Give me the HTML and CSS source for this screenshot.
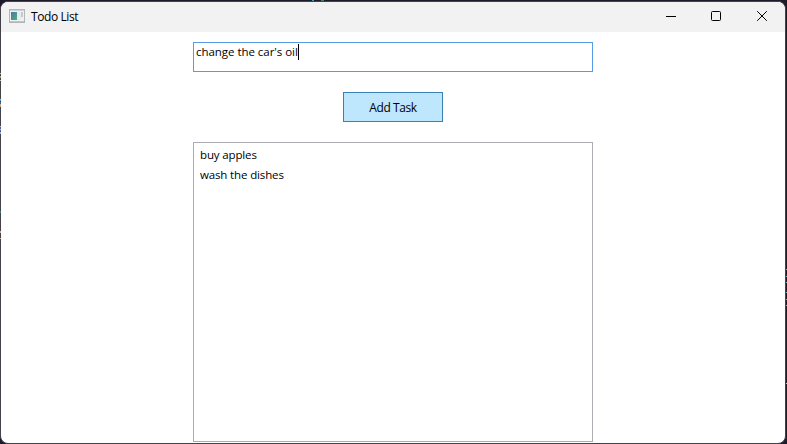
FILE: index.html
```
<!DOCTYPE html>
<html lang="en">
<head>
<meta charset="utf-8">
<title>Todo List</title>
<link rel="stylesheet" href="styles.css">
</head>
<body>
<div class="window">
  <header class="titlebar">
    <svg class="app-icon" width="16" height="14" viewBox="0 0 16 14">
      <defs><linearGradient id="pane" x1="0" y1="0" x2="1" y2="1"><stop offset="0" stop-color="#4878b0"/><stop offset="1" stop-color="#4fae74"/></linearGradient></defs>
      <rect x=".5" y=".5" width="15" height="12.5" fill="#f0f0f1" stroke="#b4b6bb"/>
      <path d="M1 1.5h14" stroke="#cfd1d6"/>
      <rect x="2" y="3" width="6" height="8" fill="url(#pane)"/>
      <rect x="8" y="3" width="4" height="8" fill="#e9ebee"/>
      <rect x="12" y="3" width="2" height="5" fill="#b9cfc9"/>
      <path d="M0 13.2h16" stroke="#a3a5aa"/>
    </svg>
    <h1 class="title">Todo List</h1>
    <div class="controls">
      <svg width="46" height="30" viewBox="0 0 46 30"><path d="M18 14.5h10" stroke="#000"/></svg>
      <svg width="46" height="30" viewBox="0 0 46 30"><rect x="17.5" y="9.5" width="9" height="9" rx="1" fill="none" stroke="#000"/></svg>
      <svg width="46" height="30" viewBox="0 0 46 30"><path d="M17.2 9.2l9.6 9.6M26.8 9.2l-9.6 9.6" stroke="#000"/></svg>
    </div>
  </header>
  <main class="content">
    <div class="task-input"><span class="entry">change the car's oil</span><span class="caret"></span></div>
    <button class="add-button">Add Task</button>
    <ul class="task-list">
      <li>buy apples</li>
      <li>wash the dishes</li>
    </ul>
  </main>
</div>
</body>
</html>
```
FILE: styles.css
```
* { box-sizing: border-box; }
/* Slivers of the dark window behind show around the edges */
body {
  margin: 0;
  height: 444px;
  padding: 1px 1px 0 0;
  overflow: hidden;
  font: 12px/17px "Open Sans", "Noto Sans", sans-serif;
  color: #000;
  background:
    linear-gradient(#3aa0b8, #3aa0b8) 312px 0 / 2px 1px no-repeat,
    linear-gradient(#3c8a56, #3c8a56) 321px 0 / 3px 2px no-repeat,
    linear-gradient(#7fb5bf, #7fb5bf) 786px 269px / 1px 1px no-repeat,
    linear-gradient(#7fb5bf, #7fb5bf) 786px 276px / 1px 1px no-repeat,
    linear-gradient(#7fb5bf, #7fb5bf) 786px 282px / 1px 1px no-repeat,
    linear-gradient(#7fb5bf, #7fb5bf) 786px 292px / 1px 1px no-repeat,
    linear-gradient(#7fb5bf, #7fb5bf) 786px 299px / 1px 1px no-repeat,
    linear-gradient(#7fb5bf, #7fb5bf) 786px 305px / 1px 1px no-repeat,
    linear-gradient(#c8c0b0, #c8c0b0) 786px 383px / 1px 1px no-repeat,
    #1d1b29;
}
body::before {
  content: "";
  position: absolute;
  left: 0;
  top: 73px;
  width: 1px;
  height: 166px;
  background: linear-gradient(
    #c5c0b8 0 1px, #434249 1px 3px, #b39a7c 3px 5px, #434249 5px 7px, #c0bdb9 7px 8px,
    #434249 8px 26px, #b8b8c4 26px 27px, #3d8fb5 27px 28px, #434249 28px 29px, #4d5b94 29px 31px, #c5b090 31px 34px,
    #434249 34px 53px, #b8b8c4 53px 54px, #4d5b94 54px 56px, #c0bdb9 56px 57px, #4d5b94 57px 59px, #a8b0c0 59px 61px,
    #434249 61px 138px, #2f7e9a 138px 140px,
    #434249 140px 158px, #c9b48c 158px 160px, #434249 160px 165px, #c5b0a8 165px 166px);
}
.window {
  height: 443px;
  border: 1px solid #434249;
  border-radius: 8px;
  overflow: hidden;
  background: #fff;
}
.titlebar {
  display: flex;
  align-items: flex-start;
  height: 30px;
  padding-left: 8px;
  background: #f2f2f2;
}
.app-icon { margin-top: 7px; }
.title {
  margin: 6px 0 0 6px;
  font: inherit;
  letter-spacing: -0.4px;
}
.controls { display: flex; margin-left: auto; margin-right: -1px; }
.controls svg { display: block; }
.content {
  display: flex;
  flex-direction: column;
  align-items: center;
  gap: 20px;
  padding-top: 10px;
}
.task-input {
  display: flex;
  width: 400px;
  height: 30px;
  padding: 1px 2px;
  border: 1px solid #569de5;
  font-size: 11.5px;
  line-height: 16px;
  white-space: nowrap;
}
.entry { letter-spacing: -0.04px; }
.caret { width: 1px; height: 16px; background: #000; }
.add-button {
  width: 100px;
  height: 30px;
  padding: 1px 0 0;
  border: 1px solid #3c7fb1;
  background: #bee6fd;
  color: #000;
  font: inherit;
  letter-spacing: -0.4px;
}
.task-list {
  width: 400px;
  height: 300px;
  margin: 0;
  padding: 2px 6px;
  border: 1px solid #abadb3;
  list-style: none;
  font-size: 11.5px;
  line-height: 20px;
  letter-spacing: -0.14px;
}
```
